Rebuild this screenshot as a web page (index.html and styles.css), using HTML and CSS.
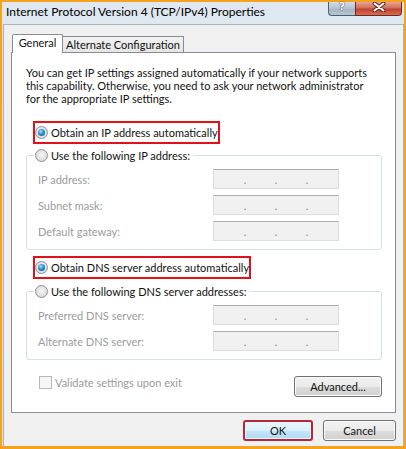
FILE: index.html
```html
<!DOCTYPE html>
<html lang="en">
<head>
<meta charset="utf-8">
<title>Internet Protocol Version 4 (TCP/IPv4) Properties</title>
<link rel="stylesheet" href="styles.css">
</head>
<body>
<div class="screen">
  <div class="window">
    <div class="titlebar">
      <span class="title">Internet Protocol Version 4 (TCP/IPv4) Properties</span>
      <div class="caption-btns">
        <div class="cap help"><span class="help-glyph">?</span></div>
        <div class="cap close">
          <svg width="14" height="10" viewBox="0 0 14 10" aria-hidden="true">
            <path d="M2.5 1.5 L11.5 8.5 M11.5 1.5 L2.5 8.5" stroke="#5a2a22" stroke-width="4" stroke-linecap="round"/>
            <path d="M2.5 1.5 L11.5 8.5 M11.5 1.5 L2.5 8.5" stroke="#ffffff" stroke-width="2" stroke-linecap="round"/>
          </svg>
        </div>
      </div>
    </div>
    <div class="client">
      <div class="tabs">
        <div class="tab active">General</div>
        <div class="tab">Alternate Configuration</div>
      </div>
      <div class="panel">
        <p class="intro">You can get IP settings assigned automatically if your network supports<br>this capability. Otherwise, you need to ask your network administrator<br>for the appropriate IP settings.</p>

        <div class="opt opt-ip"><span class="radio on"></span><span>Obtain an IP address automatically</span></div>

        <fieldset class="group group-ip">
          <legend><span class="radio"></span><span>Use the following IP address:</span></legend>
          <div class="row"><span class="label">IP address:</span><div class="ipbox"><span>.</span><span>.</span><span>.</span></div></div>
          <div class="row"><span class="label">Subnet mask:</span><div class="ipbox"><span>.</span><span>.</span><span>.</span></div></div>
          <div class="row"><span class="label">Default gateway:</span><div class="ipbox"><span>.</span><span>.</span><span>.</span></div></div>
        </fieldset>

        <div class="opt opt-dns"><span class="radio on"></span><span>Obtain DNS server address automatically</span></div>

        <fieldset class="group group-dns">
          <legend><span class="radio"></span><span>Use the following DNS server addresses:</span></legend>
          <div class="row"><span class="label">Preferred DNS server:</span><div class="ipbox"><span>.</span><span>.</span><span>.</span></div></div>
          <div class="row"><span class="label">Alternate DNS server:</span><div class="ipbox"><span>.</span><span>.</span><span>.</span></div></div>
        </fieldset>

        <div class="bottom-row">
          <div class="check"><span class="box"></span><span>Validate settings upon exit</span></div>
          <button class="btn advanced" type="button">Advanced...</button>
        </div>
      </div>
      <div class="actions">
        <button class="btn ok" type="button">OK</button>
        <button class="btn cancel" type="button">Cancel</button>
      </div>
    </div>
  </div>
</div>
</body>
</html>
```
FILE: styles.css
```css
* { box-sizing: border-box; }
html, body { margin: 0; padding: 0; }
body {
  width: 406px;
  height: 449px;
  overflow: hidden;
  font-family: Lato, "Segoe UI", "Liberation Sans", sans-serif;
  font-size: 11px;
  color: #111;
}
.screen {
  width: 406px;
  height: 449px;
  border: 2px solid #f5a21c;
  border-bottom-width: 3px;
  background: #dbe4ee;
}
.window {
  height: 100%;
  display: flex;
  flex-direction: column;
  padding-left: 1px;
  background: linear-gradient(#dfe7f0, #d6e0eb);
}
.titlebar {
  height: 22px;
  display: flex;
  align-items: flex-start;
  flex: none;
}
.title {
  font-size: 12px;
  line-height: 16px;
  padding: 2px 0 0 3px;
  color: #000;
  white-space: nowrap;
}
.caption-btns {
  margin-left: auto;
  margin-right: 2px;
  display: flex;
}
.cap {
  height: 14px;
  border: 1px solid #4f5d6e;
  border-top: none;
  display: flex;
  justify-content: center;
  align-items: flex-start;
}
.help {
  width: 27px;
  border-right: none;
  border-radius: 0 0 0 4px;
  background: linear-gradient(#d4dde7, #b3c1d0 50%, #a2b3c5 51%, #b8c6d4);
}
.help-glyph {
  color: #fff;
  font-family: "DejaVu Sans", sans-serif;
  font-weight: bold;
  font-size: 11px;
  line-height: 10px;
  text-shadow: 0 0 1px #2c3a4a, 0 0 1px #2c3a4a;
}
.close {
  width: 47px;
  border-color: #6e2a20;
  border-radius: 0 0 4px 0;
  background: linear-gradient(#e6a394, #d2705c 45%, #c1412b 55%, #d66d55);
}
.close svg { display: block; margin-top: 0; }

.client {
  flex: 1;
  background: #f0f0f0;
  border: 1px solid #a9b3be;
  border-bottom: none;
  display: flex;
  flex-direction: column;
}
.tabs {
  display: flex;
  align-items: flex-end;
  margin-top: 9px;
  padding-left: 8px;
  position: relative;
  z-index: 1;
}
.tab {
  border: 1px solid #898c95;
  border-bottom: none;
  text-align: center;
  line-height: 14px;
  padding-top: 1px;
  white-space: nowrap;
}
.tab.active {
  width: 51px;
  height: 19px;
  margin-bottom: -1px;
  background: #fff;
  border-radius: 2px 2px 0 0;
}
.tab:not(.active) {
  width: 121px;
  height: 16px;
  border-left: none;
  background: linear-gradient(#f2f2f2, #e6e6e6);
}
.panel {
  margin: 0 7px;
  height: 361px;
  background: #fff;
  border: 1px solid #898c95;
  display: flex;
  flex-direction: column;
  align-items: flex-start;
}
.intro {
  margin: 13px 0 0 14px;
  line-height: 13px;
  white-space: nowrap;
}
.opt {
  height: 23px;
  border: 2px solid #e3101a;
  display: flex;
  align-items: center;
  margin-left: 21px;
  white-space: nowrap;
}
.opt-ip { margin-top: 16px; width: 187px; }
.opt-dns { margin-top: 6px; width: 218px; }

.radio {
  width: 13px;
  height: 13px;
  border-radius: 50%;
  border: 1px solid #8e9196;
  background: radial-gradient(circle at 50% 45%, #f4f4f4 0%, #e2e2e2 55%, #cfcfcf 100%);
  margin-right: 3px;
  flex: none;
  display: flex;
  align-items: center;
  justify-content: center;
}
.radio.on::after {
  content: "";
  width: 7px;
  height: 7px;
  border-radius: 50%;
  background: radial-gradient(circle at 40% 35%, #a8e4ff 0%, #2a8fd6 45%, #0d4f8f 100%);
}

.group {
  margin: 4px 0 0 14px;
  width: 356px;
  border: 1px solid #d5dfe5;
  border-radius: 3px;
  padding: 0 0 8px 7px;
}
.group-dns { margin-top: 5px; }
.group legend {
  padding: 0 3px 0 1px;
  height: 15px;
  line-height: 15px;
  display: flex;
  align-items: center;
  white-space: nowrap;
}
.row {
  display: flex;
  align-items: center;
  height: 20px;
  margin-top: 6px;
  margin-left: 4px;
}
.label {
  width: 175px;
  color: #9b9b9b;
}
.ipbox {
  width: 126px;
  height: 20px;
  background: #f0f0f0;
  border: 1px solid #dadde2;
  border-top-color: #abadb3;
  display: flex;
  justify-content: center;
  gap: 28px;
  line-height: 20px;
  color: #8a8a8a;
}
.ipbox span { width: 3px; text-align: center; }

.bottom-row {
  align-self: stretch;
  display: flex;
  justify-content: space-between;
  align-items: flex-start;
  margin: 16px 13px 0 27px;
}
.check {
  display: flex;
  align-items: center;
  height: 13px;
  color: #9b9b9b;
  white-space: nowrap;
}
.box {
  width: 13px;
  height: 13px;
  border: 1px solid #b8b8b8;
  background: #f6f6f6;
  margin-right: 3px;
}

.btn {
  font-family: inherit;
  font-size: 11px;
  color: #111;
  height: 21px;
  padding: 0;
  border: 1px solid #707070;
  border-radius: 3px;
  background: linear-gradient(#f2f2f2 0%, #ebebeb 50%, #dddddd 51%, #cfcfcf 100%);
  box-shadow: inset 0 0 0 1px #fbfbfb;
}
.advanced { width: 88px; }
.actions {
  display: flex;
  justify-content: flex-end;
  gap: 10px;
  margin-top: 7px;
  padding-right: 7px;
}
.ok {
  width: 70px;
  border: 2px solid #b0283a;
  background: linear-gradient(#eaf6fd 0%, #d9f0fc 50%, #c3e5f8 51%, #b2daf2 100%);
  box-shadow: inset 0 0 0 1px #e9f5fc;
}
.cancel { width: 73px; }
```
